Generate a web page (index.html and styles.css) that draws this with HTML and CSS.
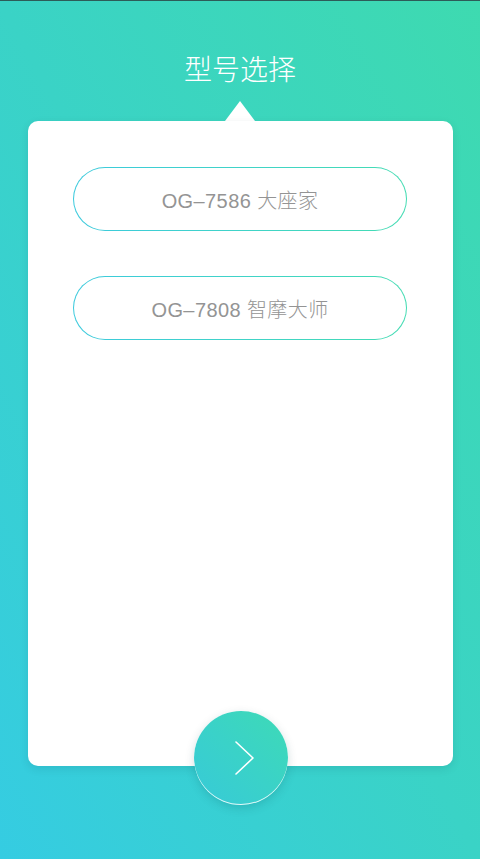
FILE: index.html
```html
<!DOCTYPE html>
<html lang="zh">
<head>
<meta charset="utf-8">
<title>型号选择</title>
<link rel="stylesheet" href="styles.css">
</head>
<body>
<div class="screen">
  <h1 class="title">型号选择</h1>
  <div class="panel">
    <div class="arrow"></div>
    <div class="card">
      <button class="model">OG–7586 大座家</button>
      <button class="model">OG–7808 智摩大师</button>
      <button class="next" aria-label="下一步">
        <svg width="24" height="36" viewBox="0 0 24 36"><polyline points="3,2 20,18 3,34" fill="none" stroke="#fff" stroke-width="1.6" stroke-linecap="round" stroke-linejoin="round"/></svg>
      </button>
    </div>
  </div>
</div>
</body>
</html>
```
FILE: styles.css
```css
html, body {
  margin: 0;
  padding: 0;
}
body {
  width: 480px;
  height: 859px;
  overflow: hidden;
  font-family: "Noto Sans CJK SC", "Noto Sans", sans-serif;
}
.screen {
  box-sizing: border-box;
  height: 859px;
  border-top: 1px solid #2d5c58;
  background: linear-gradient(to top right, #35cce2 0%, #3ad3c6 50%, #3edab0 100%);
  display: flex;
  flex-direction: column;
  align-items: center;
}
.title {
  margin: 47px 0 0;
  height: 40px;
  line-height: 40px;
  font-size: 28px;
  font-weight: 300;
  color: #fff;
  letter-spacing: 0;
}
.panel {
  margin-top: 13px;
  display: flex;
  flex-direction: column;
  align-items: center;
  align-self: stretch;
}
.arrow {
  width: 0;
  height: 0;
  border-left: 15px solid transparent;
  border-right: 15px solid transparent;
  border-bottom: 20px solid #fff;
}
.card {
  position: relative;
  box-sizing: border-box;
  width: 425px;
  height: 645px;
  margin-left: 28px;
  margin-right: 27px;
  align-self: flex-start;
  background: #fff;
  border-radius: 10px;
  box-shadow: 0 3px 8px rgba(0, 60, 70, 0.12);
  padding: 46px 0 0 45px;
  display: flex;
  flex-direction: column;
  gap: 45px;
}
.model {
  width: 334px;
  height: 64px;
  border-radius: 32px;
  border: 1.3px solid transparent;
  background: linear-gradient(#fff, #fff) padding-box, linear-gradient(90deg, #3ccadd, #44dcb3) border-box;
  font-family: "Liberation Sans", "Noto Sans CJK SC", sans-serif;
  font-size: 20px;
  font-weight: 300;
  letter-spacing: 0.4px;
  color: #949494;
  padding: 0;
  cursor: pointer;
}
.next {
  position: absolute;
  left: 50%;
  bottom: -39px;
  width: 94px;
  height: 94px;
  margin-left: -47px;
  border-radius: 50%;
  border: none;
  padding: 0;
  background: linear-gradient(225deg, #3edab6 0%, #3ad2c8 50%, #37cad8 100%);
  box-shadow: 0 3px 10px rgba(0, 70, 80, 0.18), inset 0 -1px 0 rgba(255, 255, 255, 0.85);
  display: flex;
  align-items: center;
  justify-content: center;
  cursor: pointer;
}
.next svg {
  margin-left: 8px;
}
```
